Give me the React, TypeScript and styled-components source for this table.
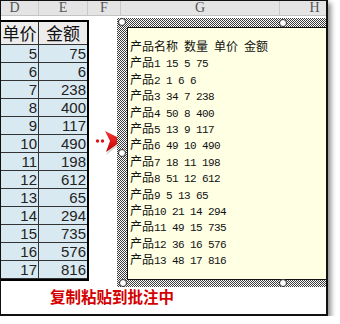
import React from 'react';
import styled, { createGlobalStyle } from 'styled-components';

const GlobalStyle = createGlobalStyle`
  html, body {
    margin: 0;
    padding: 0;
    background: #fff;
  }
`;

const prices = [5, 6, 7, 8, 9, 10, 11, 12, 13, 14, 15, 16, 17];
const totals = [75, 6, 238, 400, 117, 490, 198, 612, 65, 294, 735, 576, 816];

const noteLines = [
  '产品名称 数量 单价 金额',
  '产品1 15 5 75',
  '产品2 1 6 6',
  '产品3 34 7 238',
  '产品4 50 8 400',
  '产品5 13 9 117',
  '产品6 49 10 490',
  '产品7 18 11 198',
  '产品8 51 12 612',
  '产品9 5 13 65',
  '产品10 21 14 294',
  '产品11 49 15 735',
  '产品12 36 16 576',
  '产品13 48 17 816',
];

const columns = [
  { name: 'D', width: 48 },
  { name: 'E', width: 49 },
  { name: 'F', width: 33 },
  { name: 'G', width: 159 },
  { name: 'H', width: 70 },
];

const Window = styled.div`
  position: relative;
  width: 325px;
  height: 313px;
  border: solid #111;
  border-width: 1px 2px 2px 1px;
  box-shadow: 3px 3px 5px rgba(0, 0, 0, 0.45);
  overflow: hidden;
  background: #fff;
  display: flex;
  flex-direction: column;
`;

const ColumnBar = styled.div`
  display: flex;
  flex-shrink: 0;
  height: 14px;
  margin-left: -10px;
  background: #e4e4e4;
  border-bottom: 1px solid #c4c4c4;
`;

const ColumnLetter = styled.div<{ $width: number }>`
  flex: 0 0 ${(p) => p.$width}px;
  border-right: 1px solid #c9c9c9;
  box-sizing: border-box;
  text-align: center;
  font-family: 'Liberation Serif', serif;
  font-size: 14px;
  line-height: 14px;
  color: #555;
`;

const Sheet = styled.div`
  display: grid;
  grid-template-columns: 38px 48px;
  width: 86px;
  margin-top: 4px;
  border: solid #000;
  border-width: 2px 2px 2px 0;
`;

const HeadCell = styled.div<{ $last?: boolean }>`
  height: 22px;
  background: #ececec;
  border-bottom: 1px solid #333;
  border-right: ${(p) => (p.$last ? 'none' : '1px solid #333')};
  font-family: 'Noto Sans CJK SC', sans-serif;
  font-size: 17px;
  line-height: 22px;
  color: #111;
  text-align: center;
`;

const NumCell = styled.div<{ $last?: boolean }>`
  height: 17px;
  background: #d9e9f1;
  border-bottom: 1px solid #333;
  border-right: ${(p) => (p.$last ? 'none' : '1px solid #333')};
  padding-right: 1px;
  font-family: 'Liberation Sans', sans-serif;
  font-size: 15px;
  line-height: 18px;
  color: #222;
  text-align: right;
`;

const Caption = styled.div`
  flex: 1;
  display: flex;
  align-items: center;
  padding: 0 0 4px 49px;
  font-family: 'Noto Sans CJK SC', sans-serif;
  font-weight: 700;
  font-size: 15.5px;
  color: #d40000;
`;

const Note = styled.div`
  position: absolute;
  left: 116px;
  top: 17px;
  width: 332px;
  height: 269px;
  box-sizing: border-box;
  padding: 9px 9px 7px 10px;
  background: repeating-conic-gradient(#3a3a3a 0 25%, #fff 0 50%) 0 0 / 2px 2px;
  display: flex;
`;

const NoteBody = styled.div`
  flex: 1;
  background: #ffffe3;
  border: 1px solid #111;
  padding: 10px 0 0 2px;
`;

const NoteLine = styled.div`
  font-family: 'Liberation Mono', monospace;
  font-size: 11px;
  letter-spacing: -0.6px;
  line-height: 16.4px;
  height: 16.4px;
  color: #111;
  white-space: pre;
`;

const Han = styled.span`
  font-family: 'Noto Sans CJK SC', sans-serif;
  font-size: 12px;
  letter-spacing: 0;
`;

const Handle = styled.span<{ $x: string; $y: string }>`
  position: absolute;
  left: ${(p) => p.$x};
  top: ${(p) => p.$y};
  width: 6px;
  height: 6px;
  border-radius: 50%;
  background: #fff;
  border: 1px solid #333;
  transform: translate(-50%, -50%);
`;

const Pointer = styled.svg`
  position: absolute;
  left: 92px;
  top: 127px;
`;

const splitHan = (line: string) =>
  line.split(/([\u4e00-\u9fff]+)/).map((part, i) =>
    /[\u4e00-\u9fff]/.test(part) ? <Han key={i}>{part}</Han> : part
  );

export default function App() {
  return (
    <>
      <GlobalStyle />
      <Window>
        <ColumnBar>
          {columns.map((c) => (
            <ColumnLetter key={c.name} $width={c.width}>
              {c.name}
            </ColumnLetter>
          ))}
        </ColumnBar>

        <Sheet>
          <HeadCell>单价</HeadCell>
          <HeadCell $last>金额</HeadCell>
          {prices.map((p, i) => (
            <React.Fragment key={p}>
              <NumCell>{p}</NumCell>
              <NumCell $last>{totals[i]}</NumCell>
            </React.Fragment>
          ))}
        </Sheet>

        <Caption>复制粘贴到批注中</Caption>

        <Pointer width="32" height="28" viewBox="0 0 32 28">
          <defs>
            <linearGradient id="arrowFill" x1="0" y1="0" x2="0" y2="1">
              <stop offset="0" stopColor="#ff3434" />
              <stop offset="1" stopColor="#bb0000" />
            </linearGradient>
          </defs>
          <circle cx="4.5" cy="13" r="1.7" fill="#d81818" />
          <circle cx="9.5" cy="13" r="1.7" fill="#d81818" />
          <polygon points="15,18 29,15 13,27 17,19" fill="#888" opacity="0.35" />
          <polygon points="12,3 30,12 13,24 17,13" fill="url(#arrowFill)" />
        </Pointer>

        <Note>
          <NoteBody>
            {noteLines.map((line) => (
              <NoteLine key={line}>{splitHan(line)}</NoteLine>
            ))}
          </NoteBody>
          <Handle $x="5px" $y="4px" />
          <Handle $x="166px" $y="5px" />
          <Handle $x="5px" $y="50%" />
          <Handle $x="6px" $y="265px" />
          <Handle $x="166px" $y="265px" />
        </Note>
      </Window>
    </>
  );
}
